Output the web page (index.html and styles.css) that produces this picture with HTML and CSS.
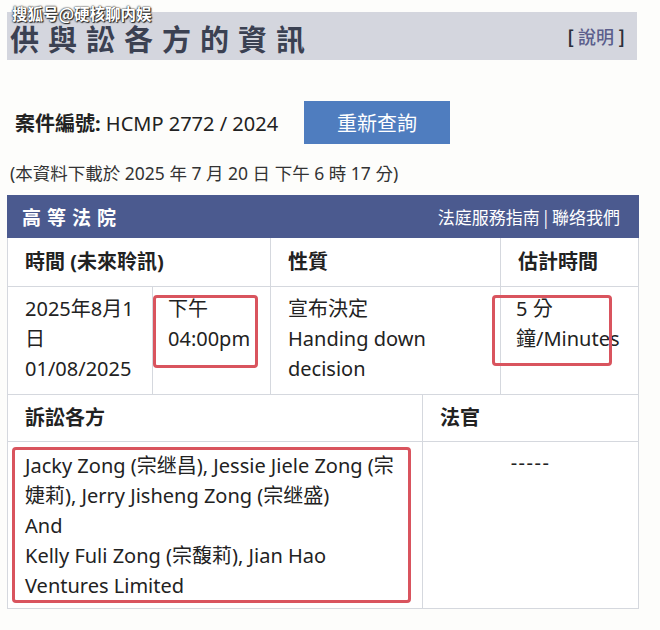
FILE: index.html
```html
<!DOCTYPE html>
<html lang="zh-Hant">
<head>
<meta charset="utf-8">
<link rel="stylesheet" href="styles.css">
</head>
<body>
<div class="page">
  <div class="watermark">搜狐号@硬核聊内娱</div>
  <div class="titlebar">
    <h1 class="title">供與訟各方的資訊</h1>
    <div class="help"><span class="br">[</span> <span class="help-link">說明</span> <span class="br">]</span></div>
  </div>

  <div class="case-row">
    <div class="case-label"><b>案件編號:</b> HCMP 2772 / 2024</div>
    <button class="requery">重新查詢</button>
  </div>

  <div class="download">(本資料下載於 2025 年 7 月 20 日 下午 6 時 17 分)</div>

  <div class="court">
    <div class="court-bar">
      <span class="court-name">高等法院</span>
      <span class="court-links">法庭服務指南 | 聯络我們</span>
    </div>
    <div class="grid grid-top">
      <div class="cell head span2">時間 (未來聆訊)</div>
      <div class="cell head">性質</div>
      <div class="cell head">估計時間</div>
      <div class="cell body">2025年8月1<br>日<br>01/08/2025</div>
      <div class="cell body mark-host">下午<br>04:00pm<span class="mark mark-time"></span></div>
      <div class="cell body">宣布決定<br>Handing down<br>decision</div>
      <div class="cell body mark-host">5 分<br>鐘/Minutes<span class="mark mark-dur"></span></div>
    </div>
    <div class="grid grid-bottom">
      <div class="cell head">訴訟各方</div>
      <div class="cell head">法官</div>
      <div class="cell body parties mark-host">Jacky Zong (宗继昌), Jessie Jiele Zong (宗婕莉), Jerry Jisheng Zong (宗继盛)<br>And<br>Kelly Fuli Zong (宗馥莉), Jian Hao Ventures Limited<span class="mark mark-parties"></span></div>
      <div class="cell body judge">-----</div>
    </div>
  </div>
</div>
</body>
</html>
```

FILE: styles.css
```css
* { box-sizing: border-box; }
html, body {
  margin: 0;
  padding: 0;
  background: #fdfdfb;
}
body {
  font-family: "Noto Sans", "Noto Sans CJK TC", sans-serif;
  color: #222;
  width: 660px;
  height: 630px;
  overflow: hidden;
}
.page {
  position: relative;
  padding: 12px 0 0 7px;
}
.watermark {
  position: absolute;
  left: 12px;
  top: 3px;
  font-family: "Noto Sans CJK SC", sans-serif;
  font-size: 15.5px;
  font-weight: 700;
  color: #fff;
  line-height: 20px;
  text-shadow: 0 0 2px #222, 0 0 1px #222, 1px 1px 1px #222;
  z-index: 2;
}
.titlebar {
  width: 630px;
  height: 48px;
  background: #d4d6de;
  display: flex;
  align-items: center;
  justify-content: space-between;
  padding: 0 12px 0 3px;
}
.title {
  margin: 0;
  font-family: "Noto Sans CJK TC", sans-serif;
  font-size: 29px;
  font-weight: 700;
  letter-spacing: 9px;
  color: #3b4152;
  line-height: 34px;
  padding-top: 4px;
}
.help {
  font-family: "Noto Sans CJK TC", sans-serif;
  font-size: 18px;
  font-weight: 700;
  color: #2c2f3a;
}
.help-link { color: #5b5e8c; font-weight: 500; }
.br { font-weight: 700; }

.case-row {
  display: flex;
  align-items: center;
  margin-top: 41px;
  padding-left: 8px;
  height: 43px;
}
.case-label {
  font-size: 20px;
  color: #222;
  width: 289px;
  white-space: nowrap;
}
.case-label b { font-weight: 700; }
.requery {
  width: 146px;
  height: 43px;
  border: none;
  background: #4f7dbf;
  color: #fff;
  font-family: "Noto Sans CJK TC", sans-serif;
  font-size: 20px;
  padding: 0;
}
.download {
  font-size: 17.5px;
  color: #333;
  margin-top: 18px;
  padding-left: 3px;
  line-height: 22px;
  white-space: nowrap;
}
.court {
  margin-top: 11px;
  width: 632px;
}
.court-bar {
  height: 43px;
  background: #4b5a8f;
  color: #fff;
  display: flex;
  align-items: center;
  justify-content: space-between;
  padding: 0 19px 0 15px;
  font-family: "Noto Sans CJK TC", sans-serif;
}
.court-name {
  font-size: 19px;
  font-weight: 700;
  letter-spacing: 6px;
}
.court-links {
  font-size: 17px;
}
.grid {
  display: grid;
  background: #d5d8de;
  gap: 1px;
  padding: 0 1px 1px 1px;
}
.grid-top {
  grid-template-columns: 144px 117px 229px 137px;
  grid-template-rows: 48px 107px;
}
.grid-bottom {
  grid-template-columns: 414px 215px;
  grid-template-rows: 46px 166px;
}
.cell {
  background: #fff;
  padding: 0 0 0 17px;
  font-size: 20px;
  line-height: 30px;
}
.span2 { grid-column: span 2; }
.head {
  font-weight: 700;
  display: flex;
  align-items: center;
  color: #222;
}
.body {
  padding-top: 7px;
  color: #222;
}
.mark-host { position: relative; }
.grid-top .body:nth-child(5) { padding-left: 15px; }
.grid-top .body:nth-child(7) { padding-left: 15px; overflow: visible; white-space: nowrap; }
.parties { padding-top: 9px; padding-right: 12px; }
.judge { text-align: center; padding-left: 0; padding-top: 6px; letter-spacing: 1.5px; }
.mark {
  position: absolute;
  border: 3px solid #d9545e;
  border-radius: 4px;
  pointer-events: none;
}
.mark-time { left: 0; top: 8px; width: 105px; height: 73px; }
.mark-dur { left: -9px; top: 8px; width: 120px; height: 71px; }
.mark-parties { left: 4px; top: 5px; width: 399px; height: 156px; }
```
